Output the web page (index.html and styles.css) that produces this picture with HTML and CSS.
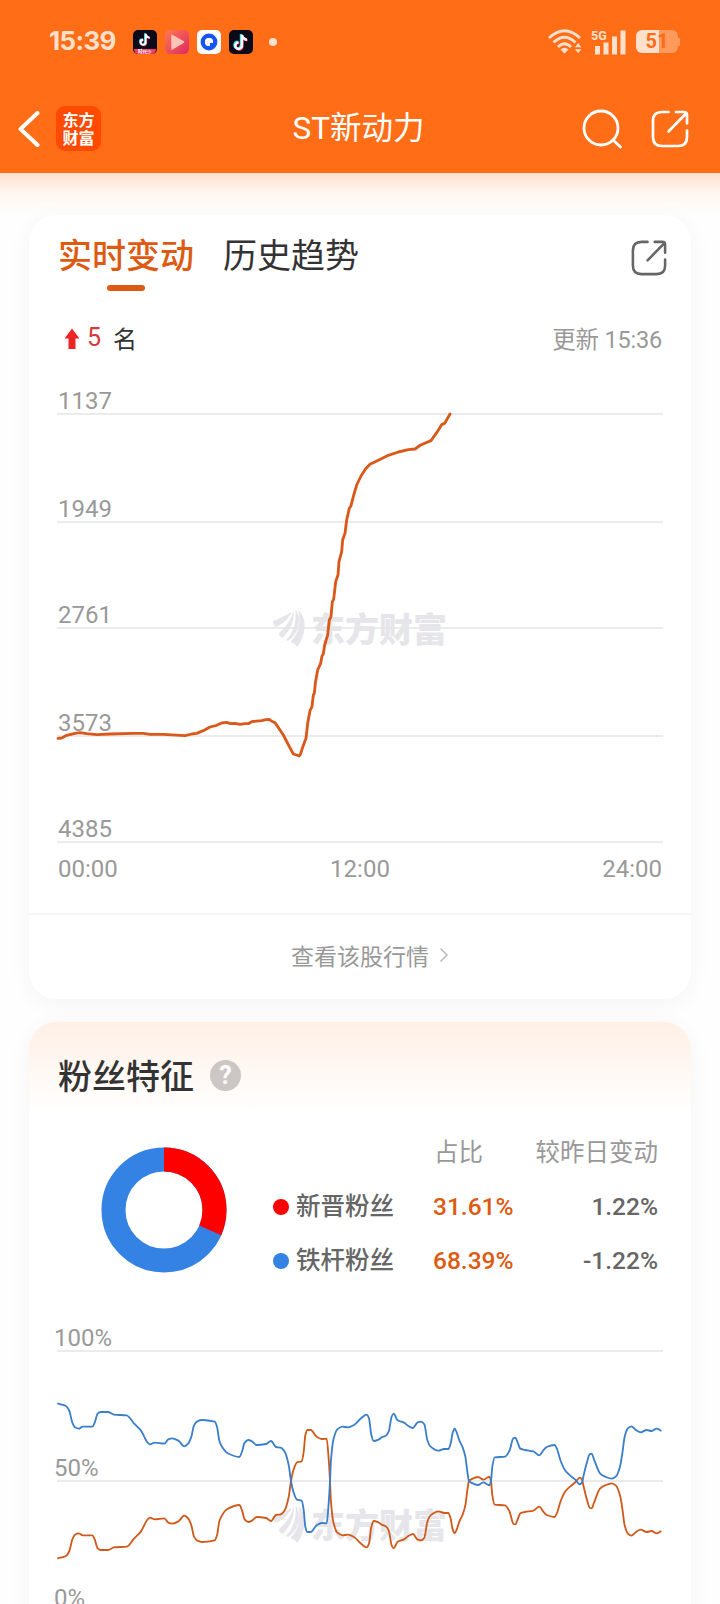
FILE: index.html
```html
<!DOCTYPE html>
<html lang="zh-CN">
<head>
<meta charset="utf-8">
<title>ST新动力</title>
<link rel="stylesheet" href="styles.css">
</head>
<body>
<svg class="defs" width="0" height="0" aria-hidden="true">
  <symbol id="share" viewBox="0 0 38 38">
    <path d="M17.5 2H11Q2 2 2 11V27Q2 36 11 36H27Q36 36 36 27V20.5M25 2H33Q36 2 36 5V13.5M17.5 21.5L35 3.5" fill="none" stroke="currentColor" stroke-width="2.7" stroke-linecap="round"/>
  </symbol>
  <symbol id="note" viewBox="0 0 24 24">
    <path d="M13 4v12a3.6 3.6 0 1 1-3.6-3.6M13 4.500q1 4.500 5.500 5" fill="none" stroke="#25e8e4" stroke-width="2.600" transform="translate(-1 -.7)"/>
    <path d="M13 4v12a3.600 3.600 0 1 1-3.600-3.600M13 4.500q1 4.500 5.500 5" fill="none" stroke="#f0305d" stroke-width="2.600" transform="translate(.7 .6)"/>
    <path d="M13 4v12a3.600 3.600 0 1 1-3.600-3.600M13 4.500q1 4.500 5.500 5" fill="none" stroke="#fff" stroke-width="2.600"/>
  </symbol>
  <symbol id="leaf" viewBox="0 0 32 38">
    <path d="M0 12Q8 9 19 3Q14 13 3 18Q0 16 0 12ZM6 24Q17 15 21 1Q22 16 10 29Q6 28 6 24ZM22.500 0Q26 4 26 13Q25 25 15 32Q14 31.500 13 31Q24 20 22.500 0ZM25.500 1Q32 7 31.500 18Q31 28 24.500 38Q21 34 17.500 32.500Q29 22 25.500 1Z" fill="currentColor"/>
  </symbol>
</svg>

<header class="header">
  <div class="status">
    <span class="time">15:39</span>
    <div class="apps">
      <svg width="24" height="24" viewBox="0 0 24 24"><rect width="24" height="24" rx="5" fill="#0b0a18"/><use href="#note" x="3.500" y="1" width="17" height="17"/><path d="M1 19h22q0 5-5 5H6q-5 0-5-5z" fill="#f43a68"/><text class="mini" x="5" y="23.300">时代少</text></svg>
      <svg width="24" height="24" viewBox="0 0 24 24"><defs><linearGradient id="pk" x2="1" y2="1"><stop stop-color="#ff7a50"/><stop offset="1" stop-color="#de2863"/></linearGradient></defs><rect width="24" height="24" rx="5" fill="url(#pk)"/><path d="M7 5.500L18.500 12L7 19z" fill="#ffc3b8" stroke="#ffc3b8" stroke-width="1.500" stroke-linejoin="round"/></svg>
      <svg width="24" height="24" viewBox="0 0 24 24"><rect width="24" height="24" rx="5" fill="#fff"/><circle cx="12" cy="12" r="6.200" fill="none" stroke="#1556f0" stroke-width="4.400"/><path d="M12 12h4v4h-4z" fill="#1556f0"/><circle cx="12" cy="12" r="4" fill="#fff"/><path d="M13 13h4v4h-4z" fill="#1556f0"/></svg>
      <svg width="24" height="24" viewBox="0 0 24 24"><rect width="24" height="24" rx="5" fill="#0b0a18"/><use href="#note" x="1" y="1" width="22" height="22"/></svg>
    </div>
    <i class="more-dot"></i>
    <svg class="wifi" width="34" height="25" viewBox="0 0 34 25" fill="none" stroke="#ffe0cd" stroke-width="2.800">
      <path d="M1 9Q16.500-5.500 32 9"/><path d="M5.500 13.500Q16.500 3 27.500 13.500"/><path d="M10 18Q16.500 11.500 23 18"/><path d="M12.500 20.500Q16.500 17 20.500 20.500L16.500 24.500z" fill="#ffe0cd" stroke="none"/>
      <path d="M27 18.300l3.200-4.300 3.200 4.300zM27 20.200l3.200 4 3.200-4z" fill="#ffe0cd" stroke="none"/>
    </svg>
    <svg class="signal" width="36" height="26" viewBox="0 0 36 26" fill="#ffe0cd">
      <text class="net" x="0" y="10.500">5G</text><path d="M4 17h5v8.500H4zM12.500 13.500h5v12h-5zM21 7.500h5v18h-5zM29.500 1.500h5v24h-5z"/>
    </svg>
    <span class="battery"><b>51</b></span>
  </div>
  <div class="nav">
    <svg class="back" width="22" height="36" viewBox="0 0 22 36"><path d="M19.500 2L2.500 18L19.500 34" fill="none" stroke="#fff" stroke-width="4" stroke-linecap="round" stroke-linejoin="round"/></svg>
    <div class="logo"><span>东方</span><span>财富</span></div>
    <h1 class="title">ST新动力</h1>
    <svg class="search" width="40" height="40" viewBox="0 0 40 40" fill="none" stroke="#fff" stroke-width="2.800" stroke-linecap="round"><circle cx="19" cy="19" r="17"/><path d="M31 31l7.500 7"/></svg>
    <svg class="share" width="38" height="38"><use href="#share"/></svg>
  </div>
</header>

<main class="content">
  <section class="card rank">
    <div class="tabs">
      <span class="tab active">实时变动</span>
      <span class="tab">历史趋势</span>
      <svg class="card-share" width="36" height="36"><use href="#share"/></svg>
    </div>
    <div class="summary">
      <svg class="up" width="16" height="22" viewBox="0 0 16 22"><path d="M8 .5L15.500 10.500H11.500V21H4.500V10.500H.500z" fill="#ee2424"/></svg>
      <span class="delta">5</span><span class="unit">名</span>
      <span class="updated">更新 15:36</span>
    </div>
    <div class="chart rank-chart">
      <div class="watermark"><svg width="32" height="38"><use href="#leaf"/></svg><span>东方财富</span></div>
      <div class="row">1137</div><div class="row">1949</div><div class="row">2761</div><div class="row">3573</div><div class="row">4385</div>
      <svg class="plot" id="rankPlot" viewBox="0 0 1818 1284"></svg>
    </div>
    <div class="hours"><span>00:00</span><span>12:00</span><span>24:00</span></div>
    <div class="link">查看该股行情<svg width="10" height="16" viewBox="0 0 10 16"><path d="M1.500 1.500L8 8L1.500 14.500" fill="none" stroke="#bbb" stroke-width="1.500"/></svg></div>
  </section>

  <section class="card fans">
    <h2 class="heading">粉丝特征<span class="help">?</span></h2>
    <div class="fan-data">
      <svg class="donut" width="126" height="126" viewBox="0 0 126 126">
        <g fill="none" stroke-width="24" transform="rotate(-90 63 63)">
          <circle cx="63" cy="63" r="50.500" stroke="#3482e3"/>
          <circle cx="63" cy="63" r="50.500" stroke="#f00" pathLength="100" stroke-dasharray="31.610 68.390"/>
        </g>
      </svg>
      <div class="table">
        <span></span><span class="th">占比</span><span class="th right">较昨日变动</span>
        <span class="name"><i class="dot red"></i>新晋粉丝</span><span class="pct">31.61%</span><span class="num">1.22%</span>
        <span class="name"><i class="dot blue"></i>铁杆粉丝</span><span class="pct">68.39%</span><span class="num">-1.22%</span>
      </div>
    </div>
    <div class="chart fan-chart">
      <div class="watermark"><svg width="32" height="38"><use href="#leaf"/></svg><span>东方财富</span></div>
      <div class="row">100%</div><div class="row">50%</div><div class="row">0%</div>
      <svg class="plot" id="fanPlot" viewBox="0 0 1818 780"></svg>
    </div>
  </section>
</main>
<script src="charts.js"></script>
</body>
</html>
```
FILE: styles.css
```css
* { box-sizing: border-box; }
body {
  margin: 0;
  width: 720px;
  height: 1604px;
  overflow: hidden;
  background: #fefefe;
  color: #333;
  font-family: Roboto, "Noto Sans CJK SC", sans-serif;
}
.defs { display: block; }
.header { height: 173px; background: #ff6d17; color: #fff; }
.status { display: flex; align-items: center; height: 83px; padding: 0 42px 0 49px; }
.time { width: 84px; color: #ffe0cd; font: 700 26px/30px Inter, sans-serif; letter-spacing: -.7px; padding-bottom: 1px; }
.apps { display: flex; gap: 8px; }
.apps svg { display: block; }
.mini { font: 700 4.500px "Noto Sans CJK SC", sans-serif; fill: #fff; }
.more-dot { width: 8px; height: 8px; margin-left: 16px; border-radius: 50%; background: #ffe0cd; }
.wifi { margin-left: auto; margin-right: 9px; }
.signal { margin-right: 9px; }
.net { font: 700 12.500px Roboto, sans-serif; }
.battery {
  position: relative;
  width: 42px;
  height: 23px;
  border-radius: 6px;
  background: linear-gradient(90deg, #ffe0cd 55%, #ff9a5d 55%);
  text-align: center;
}
.battery::after { content: ""; position: absolute; right: -2px; top: 8px; width: 3px; height: 8px; border-radius: 1px; background: #ff9a5d; }
.battery b { display: block; color: #ff6d17; font: 700 20px/23px Roboto, sans-serif; }

.nav { display: grid; grid-template-columns: 37px 45px 1fr 40px 38px; align-items: center; height: 90px; padding: 1px 31px 0 18px; }
.logo { display: flex; flex-direction: column; justify-content: center; height: 45px; margin: -1px -1px 0 1px; border-radius: 9px; background: #ff4a02; text-align: center; }
.logo span { font: 700 16px/18.500px "Noto Sans CJK SC", sans-serif; }
.title { margin: 0; padding-left: 6px; text-align: center; font-size: 31.500px; font-weight: 400; line-height: 40px; }
.search { margin: 1px 0 0 -29px; }

.content { height: 1431px; padding: 42px 29px 0; background: linear-gradient(#ffe0cc, rgba(255, 240, 230, .6) 20px, rgba(255, 255, 255, 0) 40px); }
.card { border-radius: 27px; box-shadow: 0 4px 24px rgba(0, 0, 0, .045); }
.rank { height: 784px; background: #fff; }
.tabs { display: flex; height: 76px; padding: 16px 24px 0 29px; font-size: 34px; line-height: 50px; }
.tab { width: 165px; }
.tab.active { color: #dd5a12; font-weight: 500; }
.tab.active::after { content: ""; display: block; width: 38px; height: 6px; margin: 4px 0 0 49px; border-radius: 3px; background: #dd5a12; }
.card-share { margin: 9px 0 0 auto; color: #666; }
.summary { display: flex; align-items: center; height: 67px; padding: 26px 29px 0 35px; font-size: 24px; }
.up { margin-top: 2px; }
.delta { margin-left: 7px; color: #d33a3a; font-size: 25px; }
.unit { margin-left: 12px; }
.updated { margin-left: auto; color: #999; font-size: 23.500px; letter-spacing: -.2px; }
.chart { position: relative; display: grid; width: 606px; margin-left: 28px; color: #999; font-size: 24px; }
.row { display: flex; align-items: flex-end; border-bottom: 2px solid #ebebeb; line-height: 24px; }
.rank-chart { height: 485px; grid-template-rows: 57px 108px 106px 108px 106px; }
.rank-chart .row { padding-left: 1px; }
.plot { position: absolute; left: 0; bottom: 1px; width: 606px; overflow: visible; }
.watermark { position: absolute; left: 216px; display: flex; align-items: center; height: 40px; color: #e6e6ea; }
.watermark span { margin-left: 6px; font: 900 34px/40px "Noto Sans CJK SC", sans-serif; }
.rank-chart .watermark { top: 250px; }
.hours { display: flex; justify-content: space-between; height: 70px; padding: 12px 29px 0 29px; color: #999; font-size: 24px; line-height: 28px; }
.link { display: flex; align-items: center; justify-content: center; gap: 10px; height: 86px; padding: 0 0 5px 20px; border-top: 2px solid #f5f5f5; color: #999; font-size: 23px; }

.fans { height: 620px; margin-top: 23px; background: linear-gradient(#fff0e5, #fff 90px); }
.heading { display: flex; align-items: center; height: 107px; margin: 0; padding: 0 0 2px 29px; font-size: 34px; font-weight: 500; }
.help { width: 31px; height: 31px; margin: 1px 0 0 16px; border-radius: 50%; background: #ccc7c4; color: #fff; text-align: center; font: 700 25px/32px Roboto, sans-serif; }
.fan-data { display: flex; height: 181px; padding-left: 72px; }
.donut { margin-top: 18px; }
.table { display: grid; grid-template-columns: 160px 90px 1fr; grid-auto-rows: 54px; align-items: center; flex: 1; height: 162px; margin: -3px 33px 0 46px; color: #666; font-size: 24.500px; line-height: 30px; }
.th { padding-left: 1px; color: #999; font-size: 24.500px; white-space: nowrap; }
.right, .num { text-align: right; }
.name { display: flex; align-items: center; font-weight: 500; }
.dot { width: 16px; height: 16px; margin-right: 7px; border-radius: 50%; }
.red { background: #f00; }
.blue { background: #3482e3; }
.pct { color: #dd5a12; font-weight: 500; }
.num { font-weight: 500; }
.fan-chart { height: 302px; grid-template-rows: 42px 130px 130px; }
.fan-chart .row { line-height: 24px; text-indent: -3px; }
.fan-chart .watermark { top: 194px; }
```
FILE: charts.js
```js
// Samples are [x, y] in thirds of a pixel; dx/dy move each run into plot space.
const rankRuns = [
  { dx: -111, dy: 798, pts: [[114,175],[125,174],[140,166],[165,160],[180,158],[200,161],[230,164],[270,162],[340,160],[370,160],[390,163],[430,163],[495,167],[515,162],[530,160],[550,152],[570,141],[590,136],[605,129],[620,127],[632,131],[645,130],[660,133],[675,131],[685,131],[695,125],[725,122],[738,119]] },
  { dx: 579, dy: -72, pts: [[58,988],[64,993],[75,998],[100,1035],[118,1070],[130,1092],[140,1095],[147,1098],[151,1094],[158,1072],[168,1045],[173,1000],[180,962],[186,950],[190,915],[193,910],[196,880],[203,840],[212,820],[216,798],[220,792],[224,765],[233,735],[238,690],[243,680],[247,635],[251,628],[257,575],[264,555],[267,515],[275,485],[278,450],[285,430],[290,390],[298,355],[303,347],[310,320],[320,285],[333,258],[347,236],[360,223],[385,211],[415,196],[445,186],[475,179],[495,177],[512,165],[543,152],[560,128],[576,103],[584,100],[600,72]] }
];
const fanRuns = [
  { dx: -81, dy: -513, pts: [[84,281],[108,288],[118,303],[127,338],[135,352],[146,356],[158,350],[187,350],[194,338],[203,311],[212,306],[234,306],[252,314],[290,316],[312,340],[333,362],[353,398],[360,403],[374,398],[403,401],[415,388],[426,385],[445,392],[463,409],[475,400],[484,380],[492,346],[502,334],[516,330],[554,335],[561,350],[568,392],[577,412],[592,429],[628,441],[636,425]] },
  { dx: 549, dy: -333, pts: [[14,218],[25,210],[36,214],[50,225],[78,222],[93,213],[108,231],[122,233],[135,247],[146,285],[153,333],[160,365],[171,389],[185,392],[191,420],[196,470],[202,486],[212,486],[230,466],[245,459],[260,460],[266,400],[270,333],[273,270],[280,210],[292,178],[308,170],[323,172],[342,165],[365,143],[380,134],[387,145],[394,195],[401,213],[415,209],[425,202],[437,197],[446,185],[455,140],[461,131],[473,151],[492,158],[505,168],[519,174],[532,158],[543,155],[553,163],[562,210],[571,229],[595,242],[612,237],[625,237],[632,220],[638,188],[644,176],[650,187],[658,211],[668,232],[676,260],[682,305],[687,333]] },
  { dx: 1179, dy: -333, pts: [[62,337],[84,345],[100,337],[110,342],[118,346],[123,333],[127,290],[134,262],[165,260],[178,243],[190,205],[196,203],[202,215],[211,236],[225,240],[250,244],[268,256],[280,241],[290,231],[314,225],[321,237],[331,270],[345,301],[360,316],[377,330],[389,343],[396,338],[400,320],[410,280],[419,253],[425,251],[432,268],[450,310],[465,320],[485,326],[498,319],[510,290],[517,250],[524,200],[533,176],[544,169],[558,180],[572,187],[590,180],[605,183],[620,176],[632,182]] }
];
const join = runs => runs.flatMap(r => r.pts.map(([x, y]) => [x + r.dx, y + r.dy]));

// Curve with horizontally eased, monotone tangents, so plateaus do not overshoot.
function smooth(p) {
  const slope = p.slice(1).map((q, i) => (q[1] - p[i][1]) / (q[0] - p[i][0]));
  const m = p.map((_, i) => {
    if (i === 0) return slope[0];
    if (i === p.length - 1) return slope[i - 1];
    const a = slope[i - 1], b = slope[i];
    return a * b <= 0 ? 0 : 2 * a * b / (a + b);
  });
  let d = `M${p[0]}`;
  for (let i = 1; i < p.length; i++) {
    const h = (p[i][0] - p[i - 1][0]) / 3;
    d += `C${p[i - 1][0] + h} ${p[i - 1][1] + m[i - 1] * h} ${p[i][0] - h} ${p[i][1] - m[i] * h} ${p[i]}`;
  }
  return d;
}
function draw(id, d, color, width) {
  const path = document.createElementNS("http://www.w3.org/2000/svg", "path");
  path.setAttribute("d", d);
  path.setAttribute("fill", "none");
  path.setAttribute("stroke", color);
  path.setAttribute("stroke-width", width);
  path.setAttribute("stroke-linejoin", "round");
  path.setAttribute("stroke-linecap", "round");
  document.getElementById(id).append(path);
}
draw("rankPlot", "M" + join(rankRuns).join("L"), "#d9581a", 8.5);
const loyal = join(fanRuns);
draw("fanPlot", smooth(loyal.map(([x, y]) => [x, 390 - y])), "#cf5a1c", 5.5);
draw("fanPlot", smooth(loyal.map(([x, y]) => [x, 390 + y])), "#3b7fcb", 5.5);
```
